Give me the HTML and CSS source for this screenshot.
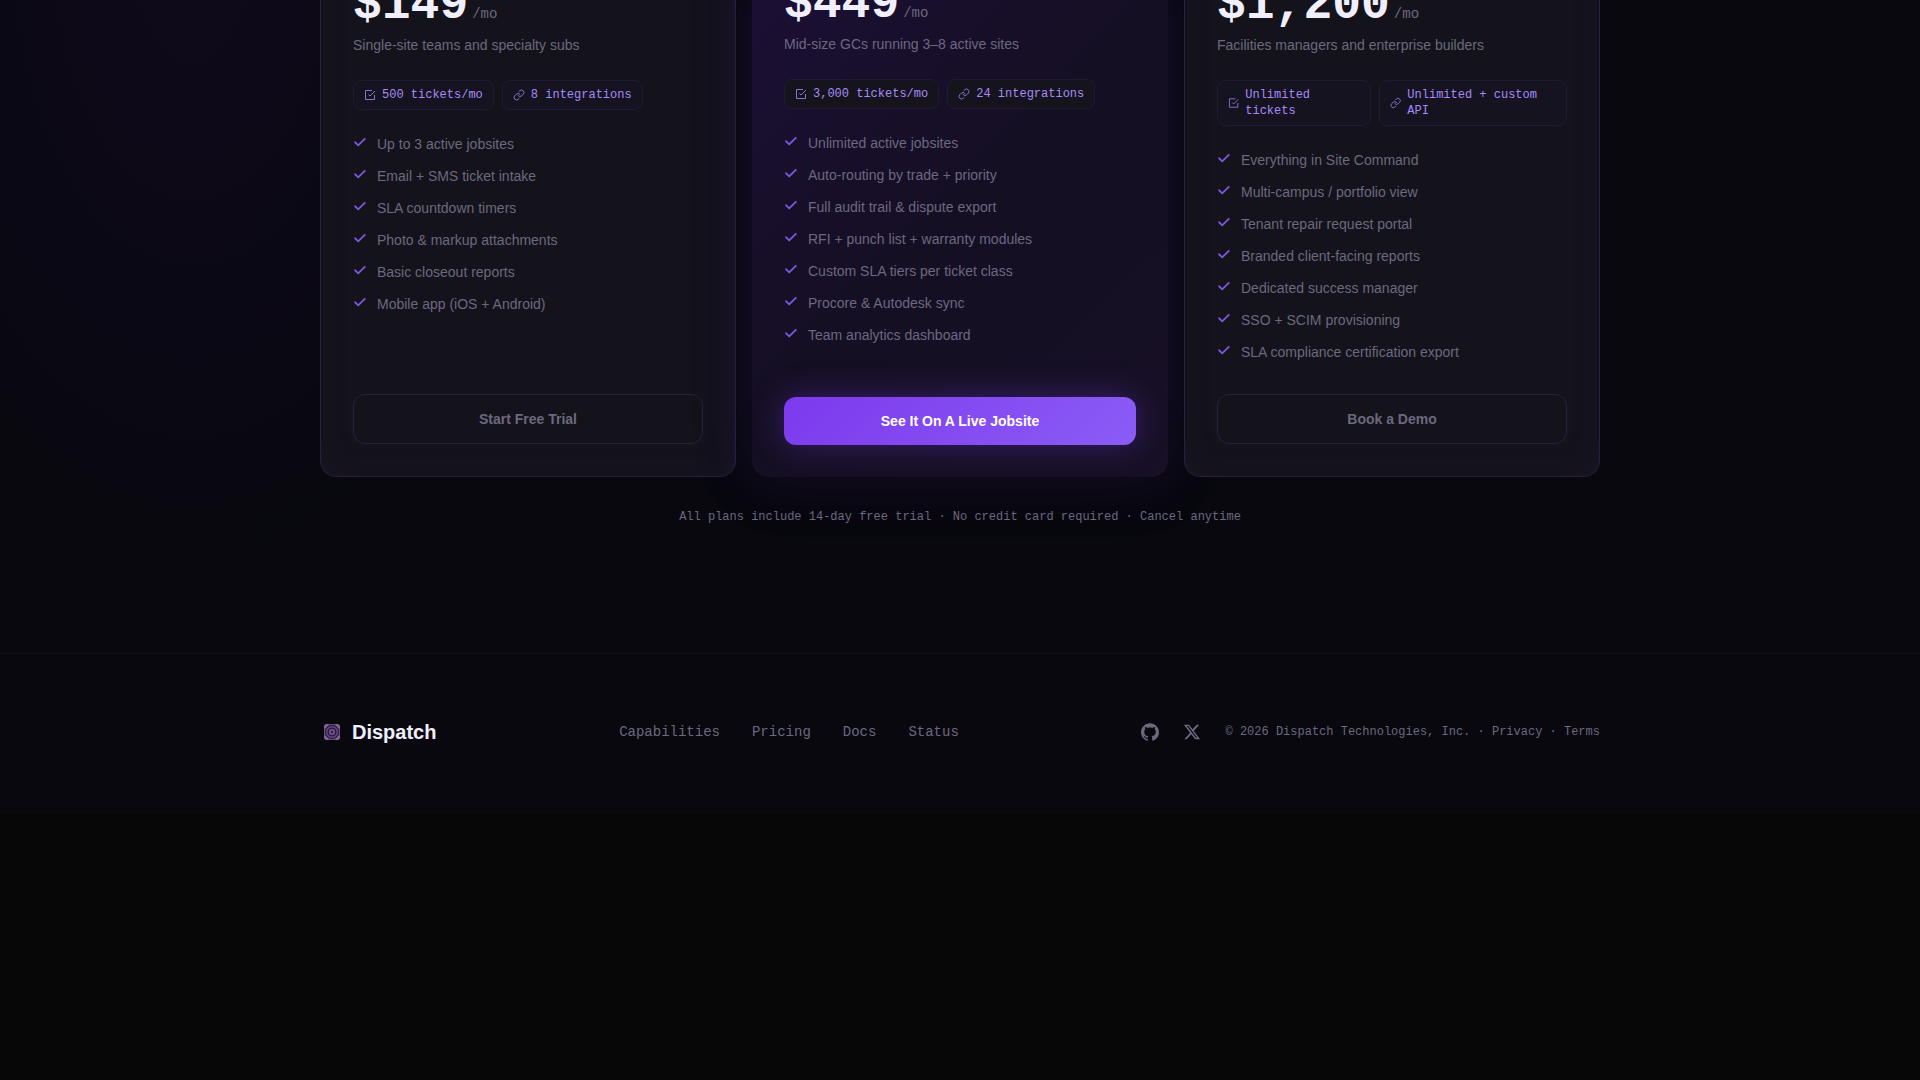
FILE: index.html
```html
<!DOCTYPE html>
<html lang="en">
<head>
  <meta charset="UTF-8">
  <meta name="viewport" content="width=device-width, initial-scale=1.0">
  <title>Pricing - Dispatch</title>
  <link rel="stylesheet" href="styles.css">
</head>
<body>
  <!-- Shared icons -->
  <svg class="sprite" aria-hidden="true">
    <symbol id="check" viewBox="0 0 14 14">
      <path d="M2 7.2l3.2 3.2L11.8 3.8" fill="none" stroke="currentColor" stroke-width="1.9" stroke-linecap="round" stroke-linejoin="round"/>
    </symbol>
    <symbol id="ticket" viewBox="0 0 24 24">
      <g fill="none" stroke="currentColor" stroke-width="2">
        <path d="M9 11l3 3L22 4"/>
        <path d="M21 12v9H3V3h13"/>
      </g>
    </symbol>
    <symbol id="link" viewBox="0 0 24 24">
      <g fill="none" stroke="currentColor" stroke-width="2" stroke-linecap="round" stroke-linejoin="round">
        <path d="M10 13a5 5 0 0 0 7.54.54l3-3a5 5 0 0 0-7.07-7.07l-1.72 1.71"/>
        <path d="M14 11a5 5 0 0 0-7.54-.54l-3 3a5 5 0 0 0 7.07 7.07l1.71-1.71"/>
      </g>
    </symbol>
  </svg>

  <div class="page">
    <!-- Pricing -->
    <main class="pricing">
      <div class="container">
        <div class="plans">
          <article class="plan">
            <p class="price">$149<span class="period">/mo</span></p>
            <p class="plan-desc">Single-site teams and specialty subs</p>
            <div class="chips">
              <span class="chip"><svg><use href="#ticket"/></svg>500 tickets/mo</span>
              <span class="chip"><svg><use href="#link"/></svg>8 integrations</span>
            </div>
            <ul class="features">
              <li><svg><use href="#check"/></svg>Up to 3 active jobsites</li>
              <li><svg><use href="#check"/></svg>Email + SMS ticket intake</li>
              <li><svg><use href="#check"/></svg>SLA countdown timers</li>
              <li><svg><use href="#check"/></svg>Photo &amp; markup attachments</li>
              <li><svg><use href="#check"/></svg>Basic closeout reports</li>
              <li><svg><use href="#check"/></svg>Mobile app (iOS + Android)</li>
            </ul>
            <button type="button" class="button outline">Start Free Trial</button>
          </article>

          <article class="plan featured">
            <p class="price">$449<span class="period">/mo</span></p>
            <p class="plan-desc">Mid-size GCs running 3–8 active sites</p>
            <div class="chips">
              <span class="chip"><svg><use href="#ticket"/></svg>3,000 tickets/mo</span>
              <span class="chip"><svg><use href="#link"/></svg>24 integrations</span>
            </div>
            <ul class="features">
              <li><svg><use href="#check"/></svg>Unlimited active jobsites</li>
              <li><svg><use href="#check"/></svg>Auto-routing by trade + priority</li>
              <li><svg><use href="#check"/></svg>Full audit trail &amp; dispute export</li>
              <li><svg><use href="#check"/></svg>RFI + punch list + warranty modules</li>
              <li><svg><use href="#check"/></svg>Custom SLA tiers per ticket class</li>
              <li><svg><use href="#check"/></svg>Procore &amp; Autodesk sync</li>
              <li><svg><use href="#check"/></svg>Team analytics dashboard</li>
            </ul>
            <button type="button" class="button primary">See It On A Live Jobsite</button>
          </article>

          <article class="plan">
            <p class="price">$1,200<span class="period">/mo</span></p>
            <p class="plan-desc">Facilities managers and enterprise builders</p>
            <div class="chips">
              <span class="chip"><svg><use href="#ticket"/></svg>Unlimited tickets</span>
              <span class="chip"><svg><use href="#link"/></svg>Unlimited + custom API</span>
            </div>
            <ul class="features">
              <li><svg><use href="#check"/></svg>Everything in Site Command</li>
              <li><svg><use href="#check"/></svg>Multi-campus / portfolio view</li>
              <li><svg><use href="#check"/></svg>Tenant repair request portal</li>
              <li><svg><use href="#check"/></svg>Branded client-facing reports</li>
              <li><svg><use href="#check"/></svg>Dedicated success manager</li>
              <li><svg><use href="#check"/></svg>SSO + SCIM provisioning</li>
              <li><svg><use href="#check"/></svg>SLA compliance certification export</li>
            </ul>
            <button type="button" class="button outline">Book a Demo</button>
          </article>
        </div>
        <p class="pricing-note">All plans include 14-day free trial · No credit card required · Cancel anytime</p>
      </div>
    </main>

    <!-- Footer -->
    <footer class="footer">
      <div class="container footer-row">
        <a href="/" class="logo">
          <svg viewBox="0 0 24 24" fill="none" stroke="currentColor" aria-hidden="true">
            <rect x="4" y="4" width="16" height="16" rx="3" fill="#694f84" stroke="none"/>
            <circle cx="12" cy="12" r="6.6" stroke="#2a1b3d" stroke-width="1.2"/>
            <circle cx="12" cy="12" r="3.9" stroke="#24163a" stroke-width="1.4"/>
            <circle cx="12" cy="12" r="1" fill="#1c112c" stroke="none"/>
            <path d="M5 8V6a1 1 0 0 1 1-1h2M16 5h2a1 1 0 0 1 1 1v2M19 16v2a1 1 0 0 1-1 1h-2M8 19H6a1 1 0 0 1-1-1v-2" stroke="#9b83b0"/>
          </svg>
          Dispatch
        </a>
        <nav class="footer-nav">
          <a href="#capabilities">Capabilities</a>
          <a href="#pricing">Pricing</a>
          <a href="#docs">Docs</a>
          <a href="#status">Status</a>
        </nav>
        <div class="footer-meta">
          <a href="#github" class="social" aria-label="GitHub">
            <svg viewBox="0 0 24 24" fill="currentColor"><path d="M12 .297c-6.63 0-12 5.373-12 12 0 5.303 3.438 9.8 8.205 11.385.6.113.82-.258.82-.577 0-.285-.01-1.04-.015-2.04-3.338.724-4.042-1.61-4.042-1.61C4.422 18.07 3.633 17.7 3.633 17.7c-1.087-.744.084-.729.084-.729 1.205.084 1.838 1.236 1.838 1.236 1.07 1.835 2.809 1.305 3.495.998.108-.776.417-1.305.76-1.605-2.665-.3-5.466-1.332-5.466-5.93 0-1.31.465-2.38 1.235-3.22-.135-.303-.54-1.523.105-3.176 0 0 1.005-.322 3.3 1.23.96-.267 1.98-.399 3-.405 1.02.006 2.04.138 3 .405 2.28-1.552 3.285-1.23 3.285-1.23.645 1.653.24 2.873.12 3.176.765.84 1.23 1.91 1.23 3.22 0 4.61-2.805 5.625-5.475 5.92.42.36.81 1.096.81 2.22 0 1.606-.015 2.896-.015 3.286 0 .315.21.69.825.57C20.565 22.092 24 17.592 24 12.297c0-6.627-5.373-12-12-12"/></svg>
          </a>
          <a href="#x" class="social" aria-label="X">
            <svg viewBox="0 0 24 24" fill="currentColor"><path d="M18.244 2.25h3.308l-7.227 8.26 8.502 11.24H16.17l-5.214-6.817L4.99 21.75H1.68l7.73-8.835L1.254 2.25H8.08l4.713 6.231zm-1.161 17.52h1.833L7.084 4.126H5.117z"/></svg>
          </a>
          <p class="copyright">© 2026 Dispatch Technologies, Inc. · <a href="#privacy">Privacy</a> · <a href="#terms">Terms</a></p>
        </div>
      </div>
    </footer>
  </div>
</body>
</html>
```
FILE: styles.css
```css
:root {
  --background: #070707;
  --surface: #08080e;
  --card: #14131b;
  --border: #272046;
  --primary: #7c3aed;
  --primary-light: #8b5cf6;
  --accent: #a78bfa;
  --text: #f1effe;
  --text-muted: #6b6880;
  --sans: "Liberation Sans", Arial, sans-serif;
  --mono: "Liberation Mono", "Courier New", monospace;
}

* {
  margin: 0;
  padding: 0;
  box-sizing: border-box;
}

body {
  font-family: var(--sans);
  font-size: 14px;
  line-height: 20px;
  background: var(--background);
  color: var(--text-muted);
  min-height: 100vh;
}

a {
  color: inherit;
  text-decoration: none;
}

.sprite {
  display: none;
}

.page {
  background: radial-gradient(360px 620px at 10% -40px, #100a1a, #0b0815 55%, transparent), var(--surface);
  overflow: hidden;
}

.container {
  max-width: 1344px;
  margin: 0 auto;
  padding: 0 32px;
}

/* Pricing */
.pricing {
  margin-top: -52px;
  padding-bottom: 128px;
}

.plans {
  display: grid;
  grid-template-columns: repeat(3, 1fr);
  gap: 16px;
}

.plan {
  display: flex;
  flex-direction: column;
  padding: 32px;
  border: 1px solid var(--border);
  border-radius: 16px;
  background: var(--card);
  box-shadow: inset 0 0 40px rgba(124, 58, 237, 0.04);
}

.plan.featured {
  border: none;
  background: linear-gradient(135deg, #1c0f36, #150f23 50%, #171026);
  box-shadow: 0 0 64px rgba(124, 58, 237, 0.15), 0 16px 48px rgba(0, 0, 0, 0.15);
}

.price {
  display: flex;
  align-items: baseline;
  gap: 4px;
  font-family: var(--mono);
  font-size: 48px;
  font-weight: 700;
  line-height: 48px;
  color: var(--text);
  margin-bottom: 5px;
}

.period {
  font-size: 14px;
  font-weight: 400;
  line-height: 20px;
  color: var(--text-muted);
}

.plan-desc {
  line-height: 22px;
  margin-bottom: 24px;
}

.chips {
  display: flex;
  gap: 8px;
  margin-bottom: 24px;
}

.chip {
  display: flex;
  align-items: center;
  gap: 6px;
  padding: 6px 10px;
  border: 1px solid #1f1a34;
  border-radius: 8px;
  background: #15131f;
  color: var(--accent);
  font-family: var(--mono);
  font-size: 12px;
  line-height: 16px;
}

.featured .chip {
  background: #15141c;
}

.chip svg {
  width: 12px;
  height: 12px;
  opacity: 0.8;
}

.features {
  flex: 1;
  display: flex;
  flex-direction: column;
  gap: 12px;
  margin-bottom: 32px;
  list-style: none;
}

.features li {
  display: flex;
  gap: 10px;
}

.features svg {
  width: 14px;
  height: 14px;
  margin-top: 1px;
  color: #7857d8;
}

.button {
  width: 100%;
  padding: 14px;
  border: none;
  border-radius: 12px;
  font-family: var(--sans);
  font-size: 14px;
  font-weight: 700;
  line-height: 20px;
  cursor: pointer;
  transition: all 0.2s;
}

.button.outline {
  border: 1px solid var(--border);
  background: transparent;
  color: var(--text-muted);
}

.button.outline:hover {
  color: var(--text);
}

.button.primary {
  background: linear-gradient(135deg, var(--primary), var(--primary-light));
  color: white;
  box-shadow: 0 0 32px rgba(124, 58, 237, 0.35);
}

.pricing-note {
  margin-top: 32px;
  font-family: var(--mono);
  font-size: 12px;
  line-height: 16px;
  text-align: center;
}

/* Footer */
.footer {
  padding: 64px 0 68px;
  border-top: 1px solid #101017;
}

.footer-row {
  display: flex;
  justify-content: space-between;
  align-items: center;
}

.logo {
  display: flex;
  align-items: center;
  gap: 8px;
  font-size: 20px;
  font-weight: 700;
  line-height: 28px;
  color: var(--text);
}

.logo svg {
  width: 24px;
  height: 24px;
}

.footer-nav {
  display: flex;
  gap: 32px;
  font-family: var(--mono);
}

.footer-nav a:hover,
.footer-meta a:hover {
  color: var(--accent);
}

.footer-meta {
  display: flex;
  align-items: center;
  gap: 24px;
}

.social svg {
  display: block;
  width: 18px;
  height: 18px;
}

.copyright {
  font-family: var(--mono);
  font-size: 12px;
  line-height: 16px;
}
```
